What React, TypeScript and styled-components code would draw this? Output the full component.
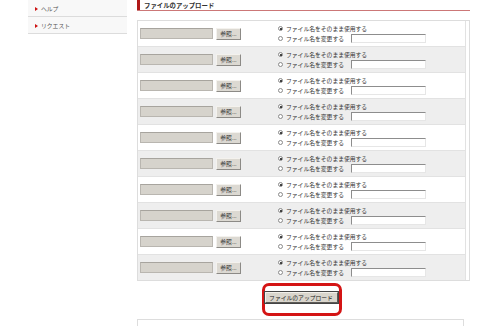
import styled, { createGlobalStyle } from "styled-components";

const GlobalStyle = createGlobalStyle`
  html, body {
    margin: 0;
    padding: 0;
    background: #ffffff;
  }
  body {
    font-family: "Noto Sans CJK JP", "Liberation Sans", sans-serif;
    color: #333333;
  }
`;

const Page = styled.div`
  display: flex;
  align-items: flex-start;
  width: 490px;
  height: 326px;
  overflow: hidden;
`;

const Sidebar = styled.ul`
  width: 99px;
  margin: 0 0 0 28px;
  padding: 0;
  list-style: none;
`;

const SideItem = styled.li`
  display: flex;
  align-items: center;
  gap: 3px;
  height: 15px;
  padding-left: 7px;
  padding-top: 1px;
  box-sizing: content-box;
  border-bottom: 1px solid #dcdcdc;
  background: #f8f8f8;
  font-size: 5.8px;
  color: #555555;
`;

const Bullet = styled.span`
  width: 0;
  height: 0;
  border-top: 2px solid transparent;
  border-bottom: 2px solid transparent;
  border-left: 3px solid #cc1111;
`;

const Main = styled.div`
  display: flex;
  flex-direction: column;
  width: 333px;
  margin-left: 10px;
`;

const Header = styled.div`
  display: flex;
  align-items: center;
  gap: 4px;
  height: 10px;
  border-bottom: 1px solid #cc7777;
`;

const HeaderBar = styled.span`
  width: 3px;
  height: 10px;
  background: #b01818;
`;

const Title = styled.h2`
  margin: 0;
  font-size: 6.4px;
  font-weight: bold;
  color: #333333;
`;

const Table = styled.div`
  display: flex;
  flex-direction: column;
  margin-top: 9px;
  padding-right: 3px;
  border: 1px solid #dddddd;
`;

const Row = styled.div<{ $shaded: boolean }>`
  display: flex;
  align-items: center;
  height: 25px;
  border-bottom: 1px solid #e2e2e2;
  border-right: 1px solid #e2e2e2;
  background: ${(p) => (p.$shaded ? "#eeeeee" : "#ffffff")};

  &:last-child {
    border-bottom: none;
  }
`;

const FileCell = styled.div`
  display: flex;
  align-items: center;
  gap: 3px;
  width: 136px;
  padding-left: 2px;
  box-sizing: border-box;
`;

const FileField = styled.span`
  width: 73px;
  height: 11px;
  box-sizing: border-box;
  background: #d6d3cc;
  border: 1px solid #b9b6b0;
  border-top-color: #a7a49e;
`;

const BrowseButton = styled.span`
  display: flex;
  align-items: center;
  justify-content: center;
  width: 25px;
  height: 12px;
  box-sizing: border-box;
  background: #dcd9d2;
  border: 1px solid #f4f2ee;
  border-right-color: #8c8a86;
  border-bottom-color: #8c8a86;
  font-size: 5.8px;
  color: #333333;
`;

const NameCell = styled.div`
  display: flex;
  flex-direction: column;
  gap: 1px;
  padding-left: 4px;
`;

const Option = styled.div`
  display: flex;
  align-items: center;
  gap: 3px;
  height: 9px;
  font-size: 5.8px;
  color: #333333;
  white-space: nowrap;
`;

const Radio = styled.span<{ $checked: boolean }>`
  position: relative;
  width: 5px;
  height: 5px;
  box-sizing: border-box;
  border-radius: 50%;
  border: 1px solid #8a8a8a;
  background: #ffffff;

  &::after {
    content: "";
    display: ${(p) => (p.$checked ? "block" : "none")};
    position: absolute;
    left: 1px;
    top: 1px;
    width: 1.5px;
    height: 1.5px;
    border-radius: 50%;
    background: #222222;
  }
`;

const NameField = styled.span`
  width: 75px;
  height: 9px;
  margin-left: 4px;
  box-sizing: border-box;
  background: #ffffff;
  border: 1px solid #e6e6e6;
  border-top-color: #8d8d8d;
  border-left-color: #8d8d8d;
`;

const SubmitArea = styled.div`
  display: flex;
  justify-content: center;
  margin-top: 2px;
  padding-right: 4px;
`;

const Highlight = styled.div`
  width: 80px;
  height: 33px;
  box-sizing: border-box;
  padding: 6px 0 0 0;
  border: 3px solid #d41414;
  border-radius: 7px;
`;

const SubmitButton = styled.span`
  display: flex;
  align-items: center;
  justify-content: center;
  width: 73px;
  height: 11px;
  box-sizing: border-box;
  background: #d9d5cc;
  border: 1px solid #f2f0eb;
  border-right-color: #5c5a56;
  border-bottom-color: #5c5a56;
  outline: 0.5px solid #444444;
  font-size: 5.8px;
  color: #222222;
`;

const NextBox = styled.div`
  height: 20px;
  margin-top: 3px;
  margin-right: 6px;
  border: 1px solid #dddddd;
  border-bottom: none;
`;

const rows = Array.from({ length: 10 }, (_, i) => i);

export default function App() {
  return (
    <>
      <GlobalStyle />
      <Page>
        <Sidebar>
          <SideItem>
            <Bullet />
            ヘルプ
          </SideItem>
          <SideItem>
            <Bullet />
            リクエスト
          </SideItem>
        </Sidebar>
        <Main>
          <Header>
            <HeaderBar />
            <Title>ファイルのアップロード</Title>
          </Header>
          <Table>
            {rows.map((i) => (
              <Row key={i} $shaded={i % 2 === 1}>
                <FileCell>
                  <FileField />
                  <BrowseButton>参照...</BrowseButton>
                </FileCell>
                <NameCell>
                  <Option>
                    <Radio $checked />
                    ファイル名をそのまま使用する
                  </Option>
                  <Option>
                    <Radio $checked={false} />
                    ファイル名を変更する
                    <NameField />
                  </Option>
                </NameCell>
              </Row>
            ))}
          </Table>
          <SubmitArea>
            <Highlight>
              <SubmitButton>ファイルのアップロード</SubmitButton>
            </Highlight>
          </SubmitArea>
          <NextBox />
        </Main>
      </Page>
    </>
  );
}
